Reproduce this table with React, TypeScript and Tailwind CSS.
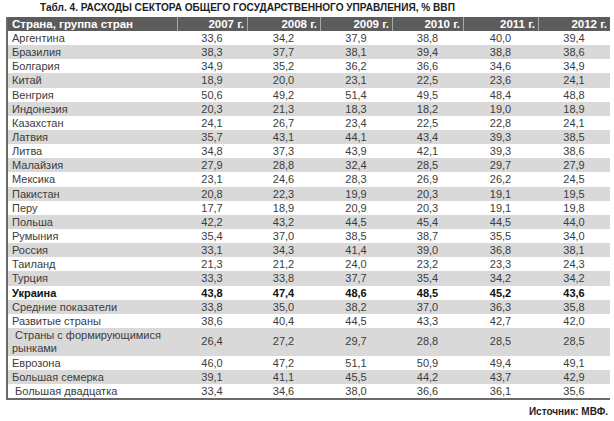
import React from 'react';

type Row = { name: React.ReactNode; key: string; values: string[]; bold?: boolean; tall?: boolean };

const rows: Row[] = [
    { key: 'ar', name: 'Аргентина', values: ['33,6', '34,2', '37,9', '38,8', '40,0', '39,4'] },
    { key: 'br', name: 'Бразилия', values: ['38,3', '37,7', '38,1', '39,4', '38,8', '38,6'] },
    { key: 'bg', name: 'Болгария', values: ['34,9', '35,2', '36,2', '36,6', '34,6', '34,9'] },
    { key: 'cn', name: 'Китай', values: ['18,9', '20,0', '23,1', '22,5', '23,6', '24,1'] },
    { key: 'hu', name: 'Венгрия', values: ['50,6', '49,2', '51,4', '49,5', '48,4', '48,8'] },
    { key: 'id', name: 'Индонезия', values: ['20,3', '21,3', '18,3', '18,2', '19,0', '18,9'] },
    { key: 'kz', name: 'Казахстан', values: ['24,1', '26,7', '23,4', '22,5', '22,8', '24,1'] },
    { key: 'lv', name: 'Латвия', values: ['35,7', '43,1', '44,1', '43,4', '39,3', '38,5'] },
    { key: 'lt', name: 'Литва', values: ['34,8', '37,3', '43,9', '42,1', '39,3', '38,6'] },
    { key: 'my', name: 'Малайзия', values: ['27,9', '28,8', '32,4', '28,5', '29,7', '27,9'] },
    { key: 'mx', name: 'Мексика', values: ['23,1', '24,6', '28,3', '26,9', '26,2', '24,5'] },
    { key: 'pk', name: 'Пакистан', values: ['20,8', '22,3', '19,9', '20,3', '19,1', '19,5'] },
    { key: 'pe', name: 'Перу', values: ['17,7', '18,9', '20,9', '20,3', '19,1', '19,8'] },
    { key: 'pl', name: 'Польша', values: ['42,2', '43,2', '44,5', '45,4', '44,5', '44,0'] },
    { key: 'ro', name: 'Румыния', values: ['35,4', '37,0', '38,5', '38,7', '35,5', '34,0'] },
    { key: 'ru', name: 'Россия', values: ['33,1', '34,3', '41,4', '39,0', '36,8', '38,1'] },
    { key: 'th', name: 'Таиланд', values: ['21,3', '21,2', '24,0', '23,2', '23,3', '24,3'] },
    { key: 'tr', name: 'Турция', values: ['33,3', '33,8', '37,7', '35,4', '34,2', '34,2'] },
    { key: 'ua', name: 'Украина', values: ['43,8', '47,4', '48,6', '48,5', '45,2', '43,6'], bold: true },
    { key: 'avg', name: 'Средние показатели', values: ['33,8', '35,0', '38,2', '37,0', '36,3', '35,8'] },
    { key: 'dev', name: 'Развитые страны', values: ['38,6', '40,4', '44,5', '43,3', '42,7', '42,0'] },
    {
        key: 'em',
        name: (
            <>
                {'\u00a0Страны с формирующимися'}
                <br />
                рынками
            </>
        ),
        values: ['26,4', '27,2', '29,7', '28,8', '28,5', '28,5'],
        tall: true,
    },
    { key: 'ez', name: 'Еврозона', values: ['46,0', '47,2', '51,1', '50,9', '49,4', '49,1'] },
    { key: 'g7', name: 'Большая семерка', values: ['39,1', '41,1', '45,5', '44,2', '43,7', '42,9'] },
    { key: 'g20', name: '\u00a0Большая двадцатка', values: ['33,4', '34,6', '38,0', '36,6', '36,1', '35,6'] },
];

const years = ['2007 г.', '2008 г.', '2009 г.', '2010 г.', '2011 г.', '2012 г.'];
const gridClass = 'grid grid-cols-[169px_70px_73px_72px_71px_75px_72px]';

const App: React.FC = () => {
    return (
        <div className="w-[614px] h-[421px] bg-white font-['Liberation_Sans',Arial,sans-serif] text-[#3c3c3c] overflow-hidden">
            <div className="h-[17px] pl-[40px] pt-[1px] text-[10.1px] font-bold leading-[14px] text-[#1e1e1e]">
                Табл. 4. РАСХОДЫ СЕКТОРА ОБЩЕГО ГОСУДАРСТВЕННОГО УПРАВЛЕНИЯ, % ВВП
            </div>

            <div className="ml-[6px] w-[604px] border-l-2 border-b-2 border-[#6a6a6a]">
                {/* header */}
                <div className={gridClass + ' h-[14px] bg-[#5c5c5c] text-white font-bold text-[11.5px] leading-[14px]'}>
                    <div className="pl-[4px]">Страна, группа стран</div>
                    {years.map(y => (
                        <div key={y} className="border-l border-[#a8a8a8] text-right pr-[3px]">
                            {y}
                        </div>
                    ))}
                </div>

                {rows.map((r, i) => (
                    <div
                        key={r.key}
                        className={
                            gridClass +
                            ' items-center text-[11px] ' +
                            (r.tall ? 'h-[27.6px] leading-[13px] ' : 'h-[14.15px] leading-[14px] ') +
                            (i % 2 === 1 ? 'bg-[#d9d9d9] ' : 'bg-white ') +
                            (r.bold ? 'font-bold text-[#111111]' : '')
                        }
                    >
                        <div className="pl-[4px] whitespace-nowrap">{r.name}</div>
                        {r.values.map((v, j) => (
                            <div key={j} className="text-center">
                                {v}
                            </div>
                        ))}
                    </div>
                ))}
            </div>

            <div className="pr-[6px] pt-[6px] text-right text-[10px] font-bold text-[#1e1e1e] leading-[12px]">
                Источник: МВФ.
            </div>
        </div>
    );
};

export default App;
